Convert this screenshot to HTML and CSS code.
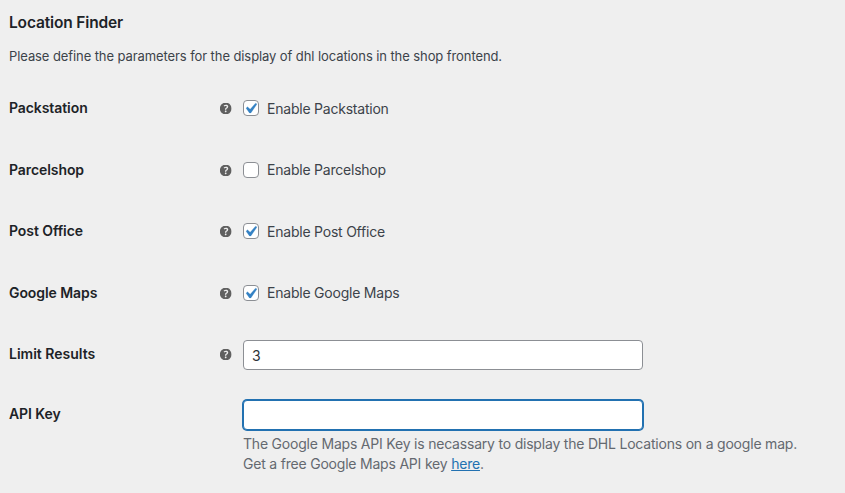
FILE: index.html
```
<!DOCTYPE html>
<html lang="en">
<head>
<meta charset="utf-8">
<title>Location Finder</title>
<link rel="stylesheet" href="styles.css">
</head>
<body>
<svg width="0" height="0" class="defs">
  <symbol id="help" viewBox="3 3 14 14"><path fill-rule="evenodd" d="M17 10c0-3.87-3.14-7-7-7-3.87 0-7 3.13-7 7s3.13 7 7 7c3.86 0 7-3.13 7-7zm-6.3 1.48H9.14v-.43c0-.38.08-.7.24-.98s.46-.57.88-.89c.41-.29.68-.53.81-.71.14-.18.2-.39.2-.62 0-.25-.09-.44-.28-.58-.19-.13-.45-.19-.79-.19-.58 0-1.25.19-2 .57l-.64-1.28c.87-.49 1.8-.74 2.77-.74.81 0 1.45.2 1.92.58.48.39.71.91.71 1.55 0 .43-.09.8-.29 1.11-.19.32-.57.67-1.11 1.06-.38.28-.61.49-.71.63-.1.15-.15.34-.15.57v.35zm-1.47 2.74c-.18-.17-.27-.42-.27-.73 0-.33.08-.58.26-.75s.43-.25.77-.25c.32 0 .57.09.75.26s.27.42.27.74c0 .3-.09.55-.27.72-.18.18-.43.27-.75.27-.33 0-.58-.09-.76-.26z"/></symbol>
  <symbol id="check" viewBox="0 0 20 20"><path d="M14.83 4.89l1.34.94-5.81 8.38H9.02L5.78 9.67l1.34-1.25 2.57 2.4z"/></symbol>
</svg>
<main>
  <h2>Location Finder</h2>
  <p class="intro">Please define the parameters for the display of dhl locations in the shop frontend.</p>
  <div class="row check-row"><span class="label">Packstation</span><svg class="help"><use href="#help"/></svg><label><span class="box"><svg><use href="#check"/></svg></span><span class="text low">Enable Packstation</span></label></div>
  <div class="row check-row short"><span class="label">Parcelshop</span><svg class="help"><use href="#help"/></svg><label><span class="box"></span><span class="text">Enable Parcelshop</span></label></div>
  <div class="row check-row"><span class="label">Post Office</span><svg class="help"><use href="#help"/></svg><label><span class="box"><svg><use href="#check"/></svg></span><span class="text low">Enable Post Office</span></label></div>
  <div class="row check-row last"><span class="label">Google Maps</span><svg class="help"><use href="#help"/></svg><label><span class="box"><svg><use href="#check"/></svg></span><span class="text">Enable Google Maps</span></label></div>
  <div class="row limit-row"><span class="label">Limit Results</span><svg class="help"><use href="#help"/></svg><input type="text" value="3"></div>
  <div class="row key-row"><span class="label">API Key</span><div class="field"><input class="focused" type="text"><p>The Google Maps API Key is necassary to display the DHL Locations on a google map.<br>Get a free Google Maps API key <a href="#">here</a>.</p></div></div>
</main>
</body>
</html>
```
FILE: styles.css
```
* { box-sizing: border-box; }
body { margin: 0; background: #efefef; color: #3c434a; font: 14px/20px Inter, sans-serif; }
.defs { display: block; }
main { padding: 13px 9px 0; }
h2 { margin: 0; color: #1d2327; font-size: 15.5px; line-height: 20px; font-weight: 600; letter-spacing: -.15px; }
.intro { margin: 13px 0 31px; font-size: 13px; line-height: 21px; letter-spacing: -.09px; }
.row { display: flex; align-items: flex-start; }
.check-row { height: 20px; margin-bottom: 42px; }
.check-row.short { margin-bottom: 41px; }
.check-row.last { margin-bottom: 37px; }
.label { width: 210px; color: #1d2327; font-weight: 600; letter-spacing: -.08px; }
.help { width: 13px; height: 13px; margin: 4px 11px 0 0; padding: .6px .4px .6px .8px; fill: #606060; }
label { display: flex; align-items: flex-start; }
.box { width: 16px; height: 16px; margin: 2px 8px 0 0; border: 1px solid #8c8f94; border-radius: 4px; background: #fff; }
.box svg { display: block; width: 21px; height: 21px; margin: -3px 0 0 -4px; fill: #3582c4; stroke: #3582c4; stroke-width: .25; }
.text { letter-spacing: -.22px; }
.text.low { padding-top: 1px; }
input { display: block; width: 400px; height: 30px; padding: 0 8px; border: 1px solid #8c8f94; border-radius: 4px; background: #fff; color: #2c3338; font: inherit; outline: 0; }
.limit-row { height: 30px; }
.limit-row .label { padding-top: 4px; letter-spacing: 0; }
.limit-row .help { margin-top: 8px; }
.key-row { margin-top: 30px; }
.key-row .label { padding-top: 4px; width: 234px; }
.focused { border-color: #2271b1; box-shadow: 0 0 0 1px #2271b1; }
.field p { margin: 4px 0 0; color: #646970; letter-spacing: -.205px; }
a { color: #2271b1; }
```
